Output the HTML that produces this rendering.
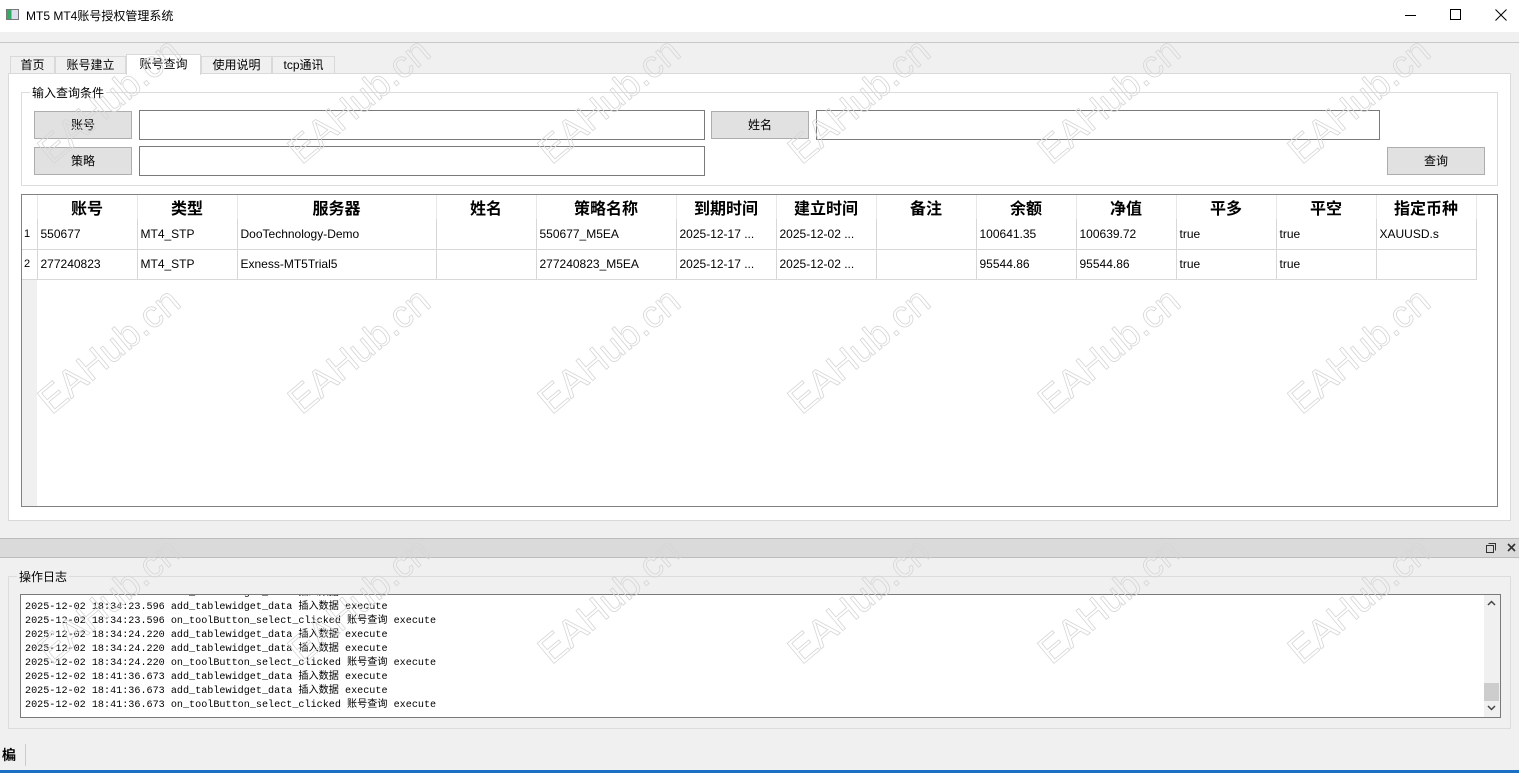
<!DOCTYPE html>
<html><head><meta charset="utf-8"><style>
*{box-sizing:border-box;margin:0;padding:0}
body{width:1519px;height:773px;background:#f0f0f0;font-family:"Liberation Sans","Noto Sans CJK SC",sans-serif;font-size:12px;color:#000;position:relative;overflow:hidden}
.abs{position:absolute}
.title{left:0;top:0;width:1519px;height:32px;background:#fff}
.tab{position:absolute;top:56px;height:18px;border:1px solid #d9d9d9;border-bottom:none;background:#f0f0f0;text-align:center;line-height:17px;font-size:12px}
.btn{position:absolute;background:#e1e1e1;border:1px solid #adadad;text-align:center;font-size:12px}
.inp{position:absolute;background:#fff;border:1px solid #7a7a7a}
table{border-collapse:collapse;table-layout:fixed}
td,th{border-right:1px solid #d8d8d8;border-bottom:1px solid #d8d8d8;padding:0 3px;white-space:nowrap;overflow:hidden;text-align:left;font-weight:normal;font-size:12px}
th{text-align:center;font-weight:bold;font-size:16px;height:24px;border-bottom:none;border-right:1px solid #e8e8e8}
td{height:30px}
.wm{position:absolute;font-family:"Liberation Sans",sans-serif;font-size:38px;color:transparent;-webkit-text-stroke:0.8px #d6d6d6;transform:rotate(-40deg);transform-origin:left bottom;white-space:nowrap;z-index:10}
.log{font-family:"Liberation Mono","Noto Sans CJK SC",monospace;font-size:10.15px;line-height:14px;white-space:pre}
</style></head><body>
<div class="abs title">
 <div class="abs" style="left:6px;top:9px;width:13px;height:11px;border:1px solid #777;background:linear-gradient(90deg,#3a6 0 40%,#dde 40%)"></div>
 <div class="abs" style="left:26px;top:7px;font-size:12px">MT5 MT4账号授权管理系统</div>
 <div class="abs" style="left:1405px;top:15px;width:11px;height:1px;background:#000"></div>
 <div class="abs" style="left:1450px;top:9px;width:11px;height:11px;border:1px solid #000"></div>
 <svg class="abs" style="left:1495px;top:9px" width="12" height="12"><path d="M0.5 0.5L11.5 11.5M11.5 0.5L0.5 11.5" stroke="#000" stroke-width="1"/></svg>
</div>
<div class="abs" style="left:0;top:42px;width:1519px;height:1px;background:#c8c8c8"></div>
<div class="tab" style="left:10px;width:45px">首页</div>
<div class="tab" style="left:55px;width:71px">账号建立</div>
<div class="tab" style="left:126px;top:54px;height:21px;width:75px;background:#fff;z-index:2;line-height:19px">账号查询</div>
<div class="tab" style="left:201px;width:71px">使用说明</div>
<div class="tab" style="left:272px;width:63px">tcp通讯</div>
<div class="abs" style="left:8px;top:73px;width:1503px;height:448px;background:#fff;border:1px solid #d9d9d9"></div>
<div class="abs" style="left:21px;top:92px;width:1477px;height:94px;border:1px solid #dcdcdc"></div>
<div class="abs" style="left:30px;top:84px;background:#fff;padding:0 2px">输入查询条件</div>
<div class="btn" style="left:34px;top:111px;width:98px;height:28px;line-height:26px">账号</div>
<div class="inp" style="left:139px;top:110px;width:566px;height:30px"></div>
<div class="btn" style="left:711px;top:111px;width:98px;height:28px;line-height:26px">姓名</div>
<div class="inp" style="left:816px;top:110px;width:564px;height:30px"></div>
<div class="btn" style="left:34px;top:147px;width:98px;height:28px;line-height:26px">策略</div>
<div class="inp" style="left:139px;top:146px;width:566px;height:30px"></div>
<div class="btn" style="left:1387px;top:147px;width:98px;height:28px;line-height:26px">查询</div>
<div class="abs" style="left:21px;top:194px;width:1477px;height:313px;border:1px solid #828282;background:#fff;overflow:hidden">
 <div class="abs" style="left:0;top:0;width:15px;height:313px;background:#f0f0f0"></div>
 <table class="abs" style="left:0;top:0">
  <colgroup><col style="width:15px"><col style="width:100px"><col style="width:100px"><col style="width:199px"><col style="width:100px"><col style="width:140px"><col style="width:100px"><col style="width:100px"><col style="width:100px"><col style="width:100px"><col style="width:100px"><col style="width:100px"><col style="width:100px"><col style="width:100px"></colgroup>
  <tr><th style="background:#fff"></th><th>账号</th><th>类型</th><th>服务器</th><th>姓名</th><th>策略名称</th><th>到期时间</th><th>建立时间</th><th>备注</th><th>余额</th><th>净值</th><th>平多</th><th>平空</th><th>指定币种</th></tr>
  <tr><td style="padding:0 2px;font-size:11px;background:#fff">1</td><td>550677</td><td>MT4_STP</td><td>DooTechnology-Demo</td><td></td><td>550677_M5EA</td><td>2025-12-17 ...</td><td>2025-12-02 ...</td><td></td><td>100641.35</td><td>100639.72</td><td>true</td><td>true</td><td>XAUUSD.s</td></tr>
  <tr><td style="padding:0 2px;font-size:11px;background:#fff">2</td><td>277240823</td><td>MT4_STP</td><td>Exness-MT5Trial5</td><td></td><td>277240823_M5EA</td><td>2025-12-17 ...</td><td>2025-12-02 ...</td><td></td><td>95544.86</td><td>95544.86</td><td>true</td><td>true</td><td></td></tr>
 </table>
</div>
<div class="abs" style="left:0;top:538px;width:1519px;height:20px;background:#dadada;border-top:1px solid #bcbcbc;border-bottom:1px solid #bcbcbc"></div>
<svg class="abs" style="left:1486px;top:543px" width="10" height="10"><path d="M2.5 0.5H9.5V7.5M0.5 2.5H7.5V9.5H0.5Z" fill="none" stroke="#333"/></svg>
<svg class="abs" style="left:1507px;top:543px" width="9" height="9"><path d="M1 1L8 8M8 1L1 8" stroke="#333" stroke-width="1.6"/></svg>
<div class="abs" style="left:8px;top:576px;width:1503px;height:153px;border:1px solid #dcdcdc"></div>
<div class="abs" style="left:17px;top:568px;background:#f0f0f0;padding:0 2px">操作日志</div>
<div class="abs" style="left:20px;top:594px;width:1481px;height:124px;border:1px solid #7a7a7a;background:#fff;overflow:hidden">
 <div class="abs log" style="left:4px;top:-8px">2025-12-02 18:34:23.596 add_tablewidget_data 插入数据 execute
2025-12-02 18:34:23.596 add_tablewidget_data 插入数据 execute
2025-12-02 18:34:23.596 on_toolButton_select_clicked 账号查询 execute
2025-12-02 18:34:24.220 add_tablewidget_data 插入数据 execute
2025-12-02 18:34:24.220 add_tablewidget_data 插入数据 execute
2025-12-02 18:34:24.220 on_toolButton_select_clicked 账号查询 execute
2025-12-02 18:41:36.673 add_tablewidget_data 插入数据 execute
2025-12-02 18:41:36.673 add_tablewidget_data 插入数据 execute
2025-12-02 18:41:36.673 on_toolButton_select_clicked 账号查询 execute</div>
 <div class="abs" style="right:0;top:0;width:16px;height:122px;background:#f0f0f0"></div>
 <div class="abs" style="right:1px;top:88px;width:15px;height:18px;background:#cdcdcd"></div>
 <svg class="abs" style="right:4px;top:5px" width="9" height="6"><path d="M1 5L4.5 1.5L8 5" fill="none" stroke="#444" stroke-width="1.5"/></svg>
 <svg class="abs" style="right:4px;top:110px" width="9" height="6"><path d="M1 1L4.5 4.5L8 1" fill="none" stroke="#444" stroke-width="1.5"/></svg>
</div>
<div class="abs" style="left:2px;top:745px;font-size:14px;font-weight:bold">楄</div>
<div class="abs" style="left:25px;top:744px;width:1px;height:22px;background:#ccc"></div>
<div class="abs" style="left:0;top:770px;width:1519px;height:3px;background:#1b6fc4"></div>
<div class="wm" style="left:58px;top:130px">EAHub.cn</div>
<div class="wm" style="left:308px;top:130px">EAHub.cn</div>
<div class="wm" style="left:558px;top:130px">EAHub.cn</div>
<div class="wm" style="left:808px;top:130px">EAHub.cn</div>
<div class="wm" style="left:1058px;top:130px">EAHub.cn</div>
<div class="wm" style="left:1308px;top:130px">EAHub.cn</div>
<div class="wm" style="left:58px;top:380px">EAHub.cn</div>
<div class="wm" style="left:308px;top:380px">EAHub.cn</div>
<div class="wm" style="left:558px;top:380px">EAHub.cn</div>
<div class="wm" style="left:808px;top:380px">EAHub.cn</div>
<div class="wm" style="left:1058px;top:380px">EAHub.cn</div>
<div class="wm" style="left:1308px;top:380px">EAHub.cn</div>
<div class="wm" style="left:58px;top:630px">EAHub.cn</div>
<div class="wm" style="left:308px;top:630px">EAHub.cn</div>
<div class="wm" style="left:558px;top:630px">EAHub.cn</div>
<div class="wm" style="left:808px;top:630px">EAHub.cn</div>
<div class="wm" style="left:1058px;top:630px">EAHub.cn</div>
<div class="wm" style="left:1308px;top:630px">EAHub.cn</div>
</body></html>
